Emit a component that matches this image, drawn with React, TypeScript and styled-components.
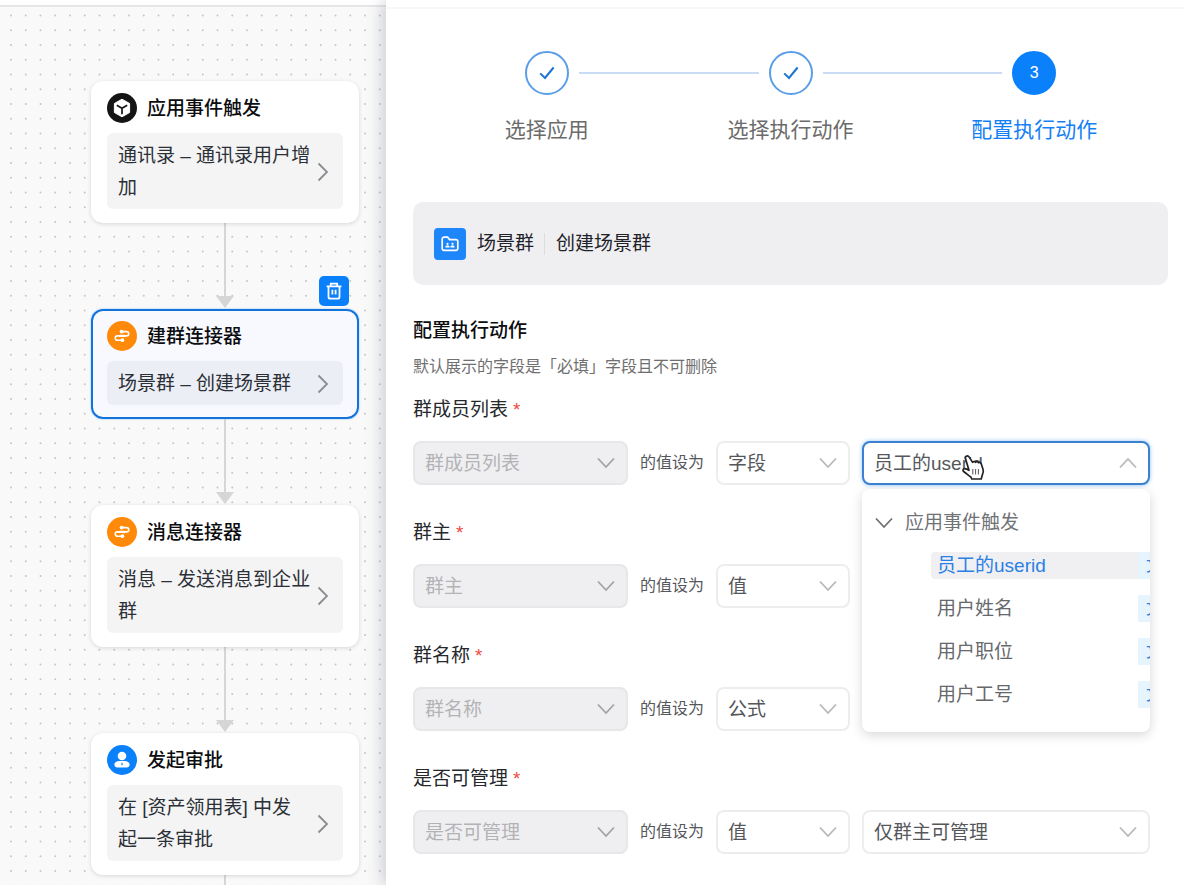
import React from "react";
import styled, { createGlobalStyle, css } from "styled-components";

const GlobalStyle = createGlobalStyle`
  *, *::before, *::after { box-sizing: border-box; }
  body {
    margin: 0;
    background: #fff;
    color: #1f2329;
    font-family: "Liberation Sans", "Noto Sans CJK SC", sans-serif;
    font-size: 19px;
    line-height: 28px;
  }
  h2, h3, p, ul, ol { margin: 0; padding: 0; font: inherit; list-style: none; }
  button, select { font: inherit; }
`;

const Page = styled.div`
  display: flex;
  height: 100vh;
  overflow: hidden;
`;

/* ---------- flow canvas ---------- */

const Canvas = styled.section`
  flex: 0 0 386px;
  display: flex;
  flex-direction: column;
  position: relative;
  background: #f9f9f9;
`;

const Dots = styled.svg`
  position: absolute;
  inset: 0;
  width: 100%;
  height: 100%;
`;

const TopBar = styled.header`
  flex: none;
  position: relative;
  height: 7px;
  background: #fff;
  border-bottom: 2px solid #e6e6e8;
`;

const Flow = styled.div`
  position: relative;
  flex: 1;
  display: flex;
  flex-direction: column;
  width: 268px;
  margin-left: 91px;
  padding-top: 74px;
`;

const Node = styled.article<{ $active?: boolean }>`
  flex: none;
  position: relative;
  padding: 12px 16px 14px;
  border-radius: 12px;
  background: ${(p) => (p.$active ? "#f7f9fe" : "#fff")};
  box-shadow: ${(p) =>
    p.$active
      ? "inset 0 0 0 2px #1473d8, 0 0 2px #7fc0ff"
      : "0 1px 4px rgba(0, 0, 0, 0.14)"};
`;

const NodeHead = styled.div`
  display: flex;
  align-items: center;
  gap: 10px;
  height: 30px;
  margin-bottom: 10px;
  svg { flex: none; }
`;

const NodeTitle = styled.h3`
  padding-top: 2px;
  font-weight: 500;
  color: #0c0d0f;
`;

const NodeBody = styled.button<{ $active?: boolean }>`
  display: flex;
  align-items: center;
  justify-content: space-between;
  width: 100%;
  padding: 7px 14px 5px 11px;
  border: 0;
  border-radius: 6px;
  background: ${(p) => (p.$active ? "#eceef5" : "#f4f4f5")};
  color: #2b2f36;
  line-height: 32px;
  text-align: left;
  white-space: pre;
  svg { flex: none; margin-left: -8px; }
`;

const Connector = styled.div<{ $last?: boolean }>`
  display: flex;
  flex-direction: column;
  align-items: center;
  height: 86px;
  &::before {
    content: "";
    flex: 1;
    width: 2px;
    background: #d6d6d6;
  }
  ${(p) =>
    p.$last
      ? css`
          flex: 1;
          height: auto;
        `
      : css`
          flex: none;
          padding-bottom: 1px;
          &::after {
            content: "";
            border: 9px solid transparent;
            border-top: 12px solid #d6d6d6;
            border-bottom: 0;
          }
        `}
`;

const DeleteButton = styled.button`
  position: absolute;
  top: -33px;
  right: 10px;
  display: flex;
  align-items: center;
  justify-content: center;
  width: 30px;
  height: 30px;
  padding: 0;
  border: 0;
  border-radius: 5px;
  background: #0a80fb;
`;

/* ---------- settings panel ---------- */

const Panel = styled.main`
  flex: 1;
  min-width: 0;
  position: relative;
  padding: 0 17px 0 27px;
  background: #fff;
  box-shadow: -2px 0 16px rgba(60, 70, 95, 0.28);
  &::before {
    content: "";
    display: block;
    height: 9px;
    margin: 0 -17px 0 -27px;
    border-bottom: 2px solid #f8f8f8;
  }
`;

const Steps = styled.ol`
  display: flex;
  padding: 42px 12px 0;
`;

const Step = styled.li<{ $current?: boolean }>`
  flex: 1;
  text-align: center;
  font-size: 21px;
  color: ${(p) => (p.$current ? "#1480f5" : "#6b6b6b")};
`;

const StepTrack = styled.div`
  display: flex;
  align-items: center;
  gap: 10px;
  margin-bottom: 21px;
`;

const StepLine = styled.span<{ $hidden?: boolean }>`
  flex: 1;
  height: 2px;
  background: ${(p) => (p.$hidden ? "transparent" : "#c9dcf4")};
`;

const StepDot = styled.span<{ $current?: boolean }>`
  display: flex;
  align-items: center;
  justify-content: center;
  width: 44px;
  height: 44px;
  border: 2px solid ${(p) => (p.$current ? "#0a80fb" : "#5a9ee8")};
  border-radius: 50%;
  background: ${(p) => (p.$current ? "#0a80fb" : "#fff")};
  color: #fff;
  font-size: 16px;
`;

const Summary = styled.div`
  display: flex;
  align-items: center;
  height: 83px;
  margin-top: 58px;
  padding: 0 21px;
  border-radius: 10px;
  background: #efeff1;
`;

const SummaryIcon = styled.span`
  display: flex;
  align-items: center;
  justify-content: center;
  width: 32px;
  height: 32px;
  margin-right: 11px;
  border-radius: 4px;
  background: #1e86fb;
`;

const SummaryDivider = styled.span`
  width: 1px;
  height: 22px;
  margin: 0 11px 0 10px;
  background: #dcdde0;
`;

const Heading = styled.h2`
  margin-top: 32px;
  font-weight: 500;
  color: #0c0d0f;
`;

const Hint = styled.p`
  margin: 8px 0 15px;
  font-size: 16px;
  color: #6f6f6f;
`;

const Form = styled.form`
  display: flex;
  flex-direction: column;
  gap: 34px;
  padding-right: 18px;
`;

const Field = styled.div`
  display: flex;
  flex-direction: column;
  gap: 17px;
`;

const FieldLabel = styled.label`
  color: #26282c;
`;

const Required = styled.span`
  margin-left: 5px;
  color: #ec4a3f;
`;

const FieldRow = styled.div`
  display: grid;
  grid-template-columns: 215px 64px 134px 1fr;
  align-items: center;
  column-gap: 12px;
`;

const RowText = styled.span`
  font-size: 16px;
  color: #55575b;
  white-space: nowrap;
`;

const SelectBox = styled.div<{ $muted?: boolean }>`
  position: relative;
  display: flex;
  & > svg {
    position: absolute;
    top: 16px;
    right: 13px;
    pointer-events: none;
    color: ${(p) => (p.$muted ? "#a3a3a6" : "#b8b8ba")};
  }
`;

const SelectInput = styled.select<{ $open?: boolean }>`
  appearance: none;
  width: 100%;
  height: 44px;
  padding: 2px 36px 0 10px;
  border: 2px solid ${(p) => (p.$open ? "#3c80cf" : "#ededee")};
  border-radius: 8px;
  background: #fff;
  box-shadow: ${(p) => (p.$open ? "0 0 4px #8cc4fb" : "none")};
  color: #55575b;
  outline: none;
  &:disabled {
    border-color: #e7e7e9;
    background: #efeff1;
    color: #b3b3b6;
    opacity: 1;
  }
`;

const Menu = styled.div`
  position: absolute;
  z-index: 2;
  top: 48px;
  left: 0;
  right: 0;
  padding: 20px 0 24px;
  overflow: hidden;
  border-radius: 8px;
  background: #fff;
  box-shadow: 0 3px 12px rgba(0, 0, 0, 0.16);
`;

const MenuGroup = styled.button`
  display: flex;
  align-items: center;
  gap: 12px;
  width: 100%;
  height: 27px;
  padding: 0 13px;
  border: 0;
  background: none;
  color: #707276;
`;

const MenuItem = styled.li<{ $selected?: boolean }>`
  display: flex;
  justify-content: space-between;
  width: 255px;
  height: 27px;
  margin: 16px 0 0 69px;
  padding-left: 6px;
  border-radius: 4px;
  line-height: 27px;
  background: ${(p) => (p.$selected ? "#f0f0f2" : "#fff")};
  color: ${(p) => (p.$selected ? "#2b7fe6" : "#66686c")};
`;

const Tag = styled.span`
  width: 48px;
  padding-left: 8px;
  background: #e6f4fe;
  color: #2b7fe6;
  font-size: 16px;
`;

const Pointer = styled.svg``;

/* ---------- icons ---------- */

const Chevron = ({ dir = "down" }: { dir?: "down" | "up" }) => (
  <svg width="18" height="12" viewBox="0 0 18 12" fill="none" stroke="currentColor" strokeWidth="1.8">
    <path d={dir === "down" ? "M1 1.5 9 10l8-8.500" : "M1 10.500 9 2l8 8.500"} />
  </svg>
);

const ChevronRight = () => (
  <svg width="12" height="20" viewBox="0 0 12 20" fill="none" stroke="#8a8c90" strokeWidth="1.8">
    <path d="M1.500 1.500 10 10l-8.500 8.500" />
  </svg>
);

const CubeIcon = () => (
  <svg width="30" height="30" viewBox="0 0 30 30">
    <circle cx="15" cy="15" r="15" fill="#151515" />
    <path d="M15 6.200 22.600 10.500v9L15 23.800 7.400 19.500v-9Z" fill="#fff" stroke="#fff" strokeLinejoin="round" />
    <path d="M9.800 12.300 15 15.200l5.200-2.900M15 15.200v6" fill="none" stroke="#151515" strokeWidth="1.700" />
  </svg>
);

const LinkIcon = () => (
  <svg width="30" height="30" viewBox="0 0 30 30">
    <circle cx="15" cy="15" r="15" fill="#ff8a0a" />
    <path
      d="M14.500 10.600H19.600a2.150 2.150 0 0 1 0 4.300H10.400a2.150 2.150 0 0 0 0 4.300H15.500"
      fill="none"
      stroke="#fff"
      strokeWidth="1.600"
      strokeLinecap="round"
    />
    <circle cx="14.600" cy="10.600" r="1.900" fill="#fff" />
    <circle cx="15.400" cy="19.200" r="1.900" fill="#fff" />
    <path d="M13 14.900h4" stroke="#fff" strokeWidth="2.400" strokeLinecap="round" />
  </svg>
);

const PersonIcon = () => (
  <svg width="30" height="30" viewBox="0 0 30 30">
    <circle cx="15" cy="15" r="15" fill="#0a80fb" />
    <circle cx="15" cy="11" r="4.300" fill="#fff" />
    <path d="M7.400 19.600c0-2.400 2.500-3.600 5-3.600h5.200c2.500 0 5 1.200 5 3.600 0 2.100-1.200 2.900-3 2.900h-9.200c-1.800 0-3-.8-3-2.900Z" fill="#fff" />
    <path d="M15 17.800v2.400" stroke="#0a80fb" strokeWidth="1.200" />
  </svg>
);

const TrashIcon = () => (
  <svg width="16" height="18" viewBox="0 0 16 18" fill="none" stroke="#fff" strokeWidth="1.800">
    <path d="M.6 4.400h14.800M4.800 4V1.700h6.400V4M2.500 4.500v10.200c0 1.300.7 2 2 2h7c1.300 0 2-.7 2-2V4.500M6.400 7.800v4.600M9.600 7.800v4.600" />
  </svg>
);

const CheckIcon = () => (
  <svg width="16" height="14" viewBox="0 0 16 14" fill="none" stroke="#1b74d4" strokeWidth="2">
    <path d="M1.200 7.400 6 12l8.600-10.500" />
  </svg>
);

const FolderIcon = () => (
  <svg width="18" height="16" viewBox="0 0 18 16" fill="none" stroke="#fff" strokeWidth="1.700">
    <path d="M1.200 3A1.800 1.800 0 0 1 3 1.200h3.600L8.600 3.600H15A1.800 1.800 0 0 1 16.800 5.400v7.200a1.800 1.800 0 0 1-1.800 1.800H3a1.800 1.800 0 0 1-1.800-1.800Z" />
    <g fill="#fff" stroke="none">
      <circle cx="6.500" cy="7.800" r="1.100" />
      <circle cx="11.500" cy="7.800" r="1.100" />
      <path d="M4.300 11.400c0-3 4.400-3 4.400 0ZM9.300 11.400c0-3 4.400-3 4.400 0Z" />
    </g>
  </svg>
);

const PointerLayer = styled.span`
  position: absolute;
  top: 13px;
  left: 98px;
  line-height: 0;
  pointer-events: none;
`;

const HandPointer = () => (
  <PointerLayer aria-hidden="true">
    <Pointer width="26" height="27" viewBox="0 0 26 27">
      <path
        d="M6.200 2.200c1.200-.7 2.300-.2 3 .9l3.400 5.300c.6-1.100 2.200-1.200 2.900-.1.800-.9 2.500-.8 3 .4 1.200-.6 2.500.1 2.800 1.400l1.700 5.200c.5 1.700.4 3.200-.4 4.600L21.200 25h-9.400l-.9-2c-1.900-1.500-4.500-3.200-7.300-5.500-1.200-1-.6-2.900 1.100-2.900 1.300 0 2.800.7 4.300 1.700L5.600 5c-.6-1.100-.4-2.200.6-2.800Z"
        fill="#fff"
        stroke="#222"
        strokeWidth="1.700"
        strokeLinejoin="round"
      />
      <path d="M12.800 15v5.500M15.600 15v5.500M18.400 15v5.500" stroke="#555" />
    </Pointer>
  </PointerLayer>
);

/* ---------- page ---------- */

const DOT_TILE = 59;
const DOTS_PER_TILE = 4;
const dotSteps = Array.from({ length: DOTS_PER_TILE }, (_, i) => (i * DOT_TILE) / DOTS_PER_TILE);

const DotGrid = () => (
  <Dots aria-hidden="true">
    <defs>
      <pattern id="dots" x="4" y="8" width={DOT_TILE} height={DOT_TILE} patternUnits="userSpaceOnUse">
        {dotSteps.map((y) => dotSteps.map((x) => <circle key={`${x}-${y}`} cx={x + 7} cy={y + 7.5} r="1" fill="#c6c6c6" />))}
      </pattern>
    </defs>
    <rect width="100%" height="100%" fill="url(#dots)" />
  </Dots>
);

const nodes = [
  { title: "应用事件触发", body: "通讯录 – 通讯录用户增\n加", Icon: CubeIcon },
  { title: "建群连接器", body: "场景群 – 创建场景群", Icon: LinkIcon, active: true },
  { title: "消息连接器", body: "消息 – 发送消息到企业\n群", Icon: LinkIcon },
  { title: "发起审批", body: "在 [资产领用表] 中发\n起一条审批", Icon: PersonIcon },
];

const steps = ["选择应用", "选择执行动作", "配置执行动作"];

const fields = [
  { id: "members", label: "群成员列表", mode: "字段", value: "员工的userid", open: true },
  { id: "owner", label: "群主", mode: "值" },
  { id: "name", label: "群名称", mode: "公式" },
  { id: "manage", label: "是否可管理", mode: "值", value: "仅群主可管理" },
];

const options = ["员工的userid", "用户姓名", "用户职位", "用户工号"];

type DropdownProps = {
  id?: string;
  label?: string;
  value: string;
  disabled?: boolean;
  open?: boolean;
  children?: React.ReactNode;
};

const Dropdown = ({ id, label, value, disabled, open, children }: DropdownProps) => (
  <SelectBox $muted={disabled}>
    <SelectInput id={id} aria-label={label} disabled={disabled} $open={open} defaultValue={value}>
      <option>{value}</option>
    </SelectInput>
    <Chevron dir={open ? "up" : "down"} />
    {children}
  </SelectBox>
);

export default function App() {
  return (
    <Page>
      <GlobalStyle />
      <Canvas>
        <DotGrid />
        <TopBar />
        <Flow>
          {nodes.map(({ title, body, Icon, active }, i) => (
            <React.Fragment key={title}>
              <Node $active={active}>
                {active && (
                  <DeleteButton type="button" aria-label="删除">
                    <TrashIcon />
                  </DeleteButton>
                )}
                <NodeHead>
                  <Icon />
                  <NodeTitle>{title}</NodeTitle>
                </NodeHead>
                <NodeBody type="button" $active={active}>
                  <span>{body}</span>
                  <ChevronRight />
                </NodeBody>
              </Node>
              <Connector $last={i === nodes.length - 1} />
            </React.Fragment>
          ))}
        </Flow>
      </Canvas>

      <Panel>
        <Steps>
          {steps.map((step, i) => {
            const current = i === steps.length - 1;
            return (
              <Step key={step} $current={current}>
                <StepTrack>
                  <StepLine $hidden={i === 0} />
                  <StepDot $current={current}>{current ? i + 1 : <CheckIcon />}</StepDot>
                  <StepLine $hidden={current} />
                </StepTrack>
                {step}
              </Step>
            );
          })}
        </Steps>

        <Summary>
          <SummaryIcon>
            <FolderIcon />
          </SummaryIcon>
          <span>场景群</span>
          <SummaryDivider />
          <span>创建场景群</span>
        </Summary>

        <Heading>配置执行动作</Heading>
        <Hint>默认展示的字段是「必填」字段且不可删除</Hint>

        <Form>
          {fields.map((field) => (
            <Field key={field.id}>
              <FieldLabel htmlFor={field.id}>
                {field.label}
                <Required>*</Required>
              </FieldLabel>
              <FieldRow>
                <Dropdown id={field.id} value={field.label} disabled />
                <RowText>的值设为</RowText>
                <Dropdown label={`${field.label}类型`} value={field.mode} />
                {field.value && (
                  <Dropdown label={`${field.label}取值`} value={field.value} open={field.open}>
                    {field.open && (
                      <>
                        <PointerSlot />
                        <Menu>
                          <MenuGroup type="button" aria-expanded="true">
                            <Chevron />
                            应用事件触发
                          </MenuGroup>
                          <ul role="listbox" aria-label={field.label}>
                            {options.map((option) => (
                              <MenuItem
                                key={option}
                                role="option"
                                aria-selected={option === field.value}
                                $selected={option === field.value}
                              >
                                {option}
                                <Tag>文本</Tag>
                              </MenuItem>
                            ))}
                          </ul>
                        </Menu>
                      </>
                    )}
                  </Dropdown>
                )}
              </FieldRow>
            </Field>
          ))}
        </Form>
      </Panel>
    </Page>
  );
}

function PointerSlot() {
  return <HandPointer />;
}
